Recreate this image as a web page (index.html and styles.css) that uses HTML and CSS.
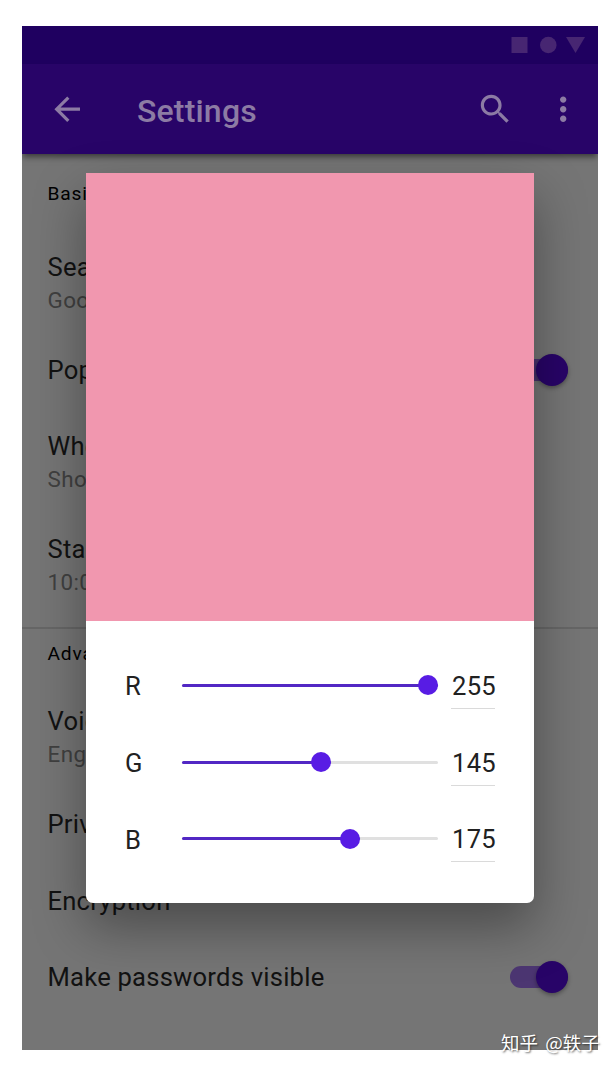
FILE: index.html
```html
<!DOCTYPE html>
<html lang="en">
<head>
<meta charset="UTF-8">
<meta name="viewport" content="width=device-width, initial-scale=1.0">
<title>Settings</title>
<link rel="stylesheet" href="styles.css">
</head>
<body>
  <div class="phone">
    <div class="status-bar">
      <svg width="76" height="20" viewBox="0 0 76 20">
        <rect x="1.5" y="2" width="16" height="16"/>
        <circle cx="38.3" cy="10" r="8.3"/>
        <path d="M56 2h19l-9.500 16z"/>
      </svg>
    </div>
    <header>
      <svg class="icon back" viewBox="0 0 24 24"><path d="M20 11H7.830l5.590-5.590L12 4l-8 8 8 8 1.410-1.410L7.830 13H20v-2z"/></svg>
      <h1>Settings</h1>
      <svg class="icon" viewBox="0 0 24 24"><path d="M15.500 14h-.79l-.28-.27C15.410 12.590 16 11.110 16 9.500 16 5.910 13.090 3 9.500 3S3 5.910 3 9.500 5.910 16 9.500 16c1.610 0 3.090-.59 4.230-1.570l.27.28v.79l5 4.990L20.490 19l-4.990-5zm-6 0C7.010 14 5 11.990 5 9.500S7.010 5 9.500 5 14 7.010 14 9.500 11.990 14 9.500 14z"/></svg>
      <svg class="icon more" viewBox="0 0 24 24"><path d="M12 8c1.100 0 2-.9 2-2s-.9-2-2-2-2 .9-2 2 .9 2 2 2zm0 2c-1.100 0-2 .9-2 2s.9 2 2 2 2-.9 2-2-.9-2-2-2zm0 6c-1.100 0-2 .9-2 2s.9 2 2 2 2-.9 2-2-.9-2-2-2z"/></svg>
    </header>

    <div class="list">
      <h2>Basic</h2>
      <div class="row two-line">
        <div class="title">Search</div>
        <div class="sub">Google</div>
      </div>
      <div class="row">
        <div class="title">Popups</div>
        <span class="switch"></span>
      </div>
      <div class="row two-line">
        <div class="title">When</div>
        <div class="sub">Show</div>
      </div>
      <div class="row two-line">
        <div class="title">Start</div>
        <div class="sub">10:00</div>
      </div>
      <h2 class="advanced">Advanced</h2>
      <div class="row two-line">
        <div class="title">Voice</div>
        <div class="sub">English</div>
      </div>
      <div class="row"><div class="title">Priv</div></div>
      <div class="row"><div class="title">Encryption</div></div>
      <div class="row">
        <div class="title">Make passwords visible</div>
        <span class="switch"></span>
      </div>
    </div>

    <!-- color picker -->
    <div class="dialog">
      <div class="swatch"></div>
      <div class="sliders">
        <div class="channel">
          <label>R</label>
          <div class="track"><div class="fill" style="width: 256px"></div></div>
          <span class="value">255</span>
        </div>
        <div class="channel">
          <label>G</label>
          <div class="track"><div class="fill" style="width: 149px"></div></div>
          <span class="value">145</span>
        </div>
        <div class="channel">
          <label>B</label>
          <div class="track"><div class="fill" style="width: 178px"></div></div>
          <span class="value">175</span>
        </div>
      </div>
    </div>
  </div>
  <div class="watermark">知乎 @轶子</div>
</body>
</html>
```
FILE: styles.css
```css
body {
  position: relative;
  margin: 0;
  padding: 26px 18px 20px 22px;
  font-family: Roboto, sans-serif;
  background-color: #fff;
  color: #121212;
}
.phone {
  position: relative;
  width: 576px;
  height: 1024px;
  overflow: hidden;
  background-color: #757575;
}
.status-bar {
  height: 38px;
  display: flex;
  justify-content: flex-end;
  align-items: center;
  padding-right: 12px;
  background-color: #1f0060;
}
.status-bar svg {
  fill: #472672;
}
header {
  height: 90px;
  box-sizing: border-box;
  padding: 0 16px 0 26px;
  display: flex;
  align-items: center;
  background-color: #280468;
  box-shadow: 0 4px 6px -1px rgba(0, 0, 0, 0.5);
}
h1 {
  flex: 1;
  margin: 3px 0 0 50.5px;
  font-size: 32px;
  font-weight: 500;
  letter-spacing: 0.2px;
  color: #8c7ba4;
}
.icon {
  width: 38.4px;
  height: 38.4px;
  fill: #8c7ba4;
}
.more {
  margin-left: 29px;
}

.list h2 {
  height: 75px;
  margin: 0;
  padding: 4px 25.5px 0;
  box-sizing: border-box;
  display: flex;
  align-items: center;
  font-size: 19.2px;
  font-weight: 400;
  letter-spacing: 0.8px;
  color: #000;
}
.list .advanced {
  height: 56px;
  margin-top: 14px;
  padding-top: 0;
  padding-bottom: 5px;
  border-top: 2px solid #666;
}
.row {
  height: 76.8px;
  padding: 0 30px 0 25.5px;
  box-sizing: border-box;
  display: flex;
  justify-content: space-between;
  align-items: center;
}
.two-line {
  height: 102.4px;
  flex-direction: column;
  justify-content: center;
  align-items: flex-start;
  padding-top: 4px;
}
.title {
  font-size: 25.6px;
  line-height: 36px;
  letter-spacing: 0.22px;
}
.sub {
  font-size: 22.4px;
  line-height: 30px;
  letter-spacing: 0.4px;
  color: #404040;
}
.switch {
  width: 58px;
  height: 22px;
  border-radius: 11px;
  display: flex;
  justify-content: flex-end;
  align-items: center;
  background-color: #4c3672;
}
.switch::after {
  content: "";
  width: 32px;
  height: 32px;
  border-radius: 50%;
  background-color: #280468;
  box-shadow: 0 2px 4px rgba(0, 0, 0, 0.35);
}

.dialog {
  position: absolute;
  left: 64px;
  top: 147px;
  width: 448px;
  height: 730px;
  border-radius: 0 0 7px 7px;
  overflow: hidden;
  background-color: #fff;
  box-shadow: 0 24px 52px rgba(0, 0, 0, 0.36);
}
.swatch {
  height: 448px;
  background-color: #f197af;
}
.sliders {
  padding: 26px 38px 0 39px;
}
.channel {
  height: 76.8px;
  display: flex;
  align-items: center;
  font-size: 25.6px;
  color: #212121;
}
.channel label {
  width: 57px;
  padding-top: 2px;
}
.track {
  width: 256px;
  height: 3px;
  border-radius: 2px;
  background-color: #e0e0e0;
}
.fill {
  height: 3px;
  border-radius: 2px;
  display: flex;
  justify-content: flex-end;
  align-items: center;
  background-color: #5227c4;
}
.fill::after {
  content: "";
  width: 20px;
  height: 20px;
  border-radius: 50%;
  background-color: #581ce4;
}
.value {
  width: 44px;
  height: 47px;
  margin-left: 13px;
  box-sizing: border-box;
  line-height: 49px;
  text-align: center;
  text-indent: 1px;
  letter-spacing: 0.3px;
  border-bottom: 1px solid #dadada;
}

.watermark {
  position: absolute;
  left: 501px;
  top: 1029px;
  font-family: "Noto Sans CJK SC", sans-serif;
  font-size: 18.5px;
  line-height: 26px;
  word-spacing: 3px;
  white-space: nowrap;
  color: #fff;
  text-shadow: 1px 1px 2px rgba(0, 0, 0, 0.6);
}
```
